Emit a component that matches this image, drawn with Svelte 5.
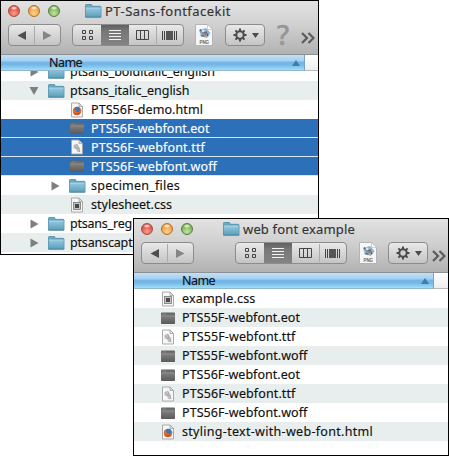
<script>
  const windows = [
    {
      id: 'kit', title: 'PT-Sans-fontfacekit', titleWidth: 126, gap: 11, help: true,
      rows: [
        { icon: 'folder', name: 'ptsans_bolditalic_english', width: 145, depth: 0, arrow: 'right' },
        { icon: 'folder', name: 'ptsans_italic_english', width: 119.5, depth: 0, arrow: 'down' },
        { icon: 'firefox', name: 'PTS56F-demo.html', width: 112, depth: 1 },
        { icon: 'exec', name: 'PTS56F-webfont.eot', width: 118.5, depth: 1, selected: true },
        { icon: 'font', name: 'PTS56F-webfont.ttf', width: 114, depth: 1, selected: true },
        { icon: 'exec', name: 'PTS56F-webfont.woff', width: 126, depth: 1, selected: true },
        { icon: 'folder', name: 'specimen_files', width: 89, depth: 1, arrow: 'right' },
        { icon: 'css', name: 'stylesheet.css', width: 81, depth: 1 },
        { icon: 'folder', name: 'ptsans_reg', width: 62, depth: 0, arrow: 'right' },
        { icon: 'folder', name: 'ptsanscapt', width: 62.5, depth: 0, arrow: 'right' }
      ]
    },
    {
      id: 'example', title: 'web font example', titleWidth: 112, gap: 41, help: false,
      rows: [
        { icon: 'css', name: 'example.css', width: 73.5 },
        { icon: 'exec', name: 'PTS55F-webfont.eot', width: 118 },
        { icon: 'font', name: 'PTS55F-webfont.ttf', width: 113.5 },
        { icon: 'exec', name: 'PTS55F-webfont.woff', width: 125.5 },
        { icon: 'exec', name: 'PTS56F-webfont.eot', width: 118 },
        { icon: 'font', name: 'PTS56F-webfont.ttf', width: 113.5 },
        { icon: 'exec', name: 'PTS56F-webfont.woff', width: 125.5 },
        { icon: 'firefox', name: 'styling-text-with-web-font.html', width: 191 }
      ]
    }
  ];

  // Tracks the letters of a label so that it fills the given width.
  function fit(node, width) {
    const natural = node.getBoundingClientRect().width;
    node.style.letterSpacing = `${(width - natural) / node.textContent.length}px`;
  }
</script>

{#snippet folder()}
  <svg width="17" height="14" viewBox="0 0 17 14">
    <path d="M.5 13V1.200Q.5.500 1.300.500H6q.8 0 .9.800l.2 1H15q1 0 1 1V13z" fill="#67a8c5" stroke="#4c8ba8" stroke-width=".8" />
    <path d="M.900 4h14.700v8.600H.900z" fill="url(#folderFace)" />
    <path d="M.900 4h14.700" stroke="#b5dceb" stroke-width=".8" />
    <path d="M.300 13.200h15.900" stroke="#417d99" stroke-width=".8" />
  </svg>
{/snippet}

{#snippet page(kind)}
  <svg width="17" height="16" viewBox="0 0 17 16">
    <path d="M2.500 1h7.500L13.500 4.500v10.500h-11z" fill="#f7f7f7" stroke="#a2a2a2" stroke-width=".9" />
    <path d="M10 1v3.500h3.500z" fill="#e4e4e4" stroke="#999" stroke-width=".7" />
    {#if kind === 'css'}
      <rect x="4.500" y="5.500" width="7" height="7" fill="#c4c4c4" stroke="#777" stroke-width=".8" />
      <rect x="6" y="7" width="4" height="4" fill="#484848" />
    {:else if kind === 'font'}
      <path d="M4.500 6l3.500-1.500L10 8l1.500 5-3 .3-1.500-3-2.500-.8z" fill="#c2c2c2" />
      <path d="M5 6.500q2 1 2.500 3.500M8 5.500q1.500 3 .5 5M10 8.500q1 2 .5 4.500" fill="none" stroke="#a0a0a0" stroke-width=".8" />
    {:else}
      <circle cx="8" cy="9" r="4.200" fill="#e1692b" />
      <circle cx="8.500" cy="7.600" r="2.800" fill="#3b78b5" />
      <path d="M4 6.500l2 1 1 2 2.500.8 1.500-1.300 1-2.500q1 3-.5 5T7 13 4 10z" fill="#e1692b" />
      <path d="M5.500 11.500q2.500 1.500 5-.5" fill="none" stroke="#b9432a" stroke-width="1" />
    {/if}
  </svg>
{/snippet}

{#snippet exec()}
  <svg width="17" height="14" viewBox="0 0 17 14">
    <rect x="1" y="1.500" width="14" height="11.500" rx=".8" fill="url(#execFace)" />
    <path d="M1.500 5h13" stroke="#959595" stroke-width=".8" />
    <path d="M2.500 3h4" stroke="#8c9691" stroke-width=".7" />
  </svg>
{/snippet}

<svg class="defs" width="0" height="0">
  <defs>
    <linearGradient id="folderFace" x2="0" y2="1"><stop stop-color="#92c9df" /><stop offset="1" stop-color="#609fbc" /></linearGradient>
    <linearGradient id="execFace" x2="0" y2="1"><stop stop-color="#626262" /><stop offset=".35" stop-color="#7c7c7c" /><stop offset="1" stop-color="#5a5a5a" /></linearGradient>
    <linearGradient id="pressed" x2="0" y2="1"><stop stop-color="#606060" /><stop offset=".3" stop-color="#777" /><stop offset="1" stop-color="#848484" /></linearGradient>
  </defs>
</svg>

<main>
  {#each windows as w (w.id)}
    <section class="window {w.id}">
      <header>
        <div class="titlebar">
          <i class="light red"></i><i class="light amber"></i><i class="light green"></i>
          <div class="title" class:second={!w.help}>
            {@render folder()}
            <span use:fit={w.titleWidth}>{w.title}</span>
          </div>
        </div>
        <div class="toolbar">
          <div class="group nav">
            <svg width="51" height="20" viewBox="0 0 51 20">
              <path d="M8.500 10.500 17 6v9z" fill="#4f4f4f" /><path d="M25.500 1v18" stroke="#aaa" /><path d="M42.500 10.500 34 6v9z" fill="#858585" />
            </svg>
          </div>
          <div class="group views" style:margin-left="{w.gap}px">
            <svg width="110" height="20" viewBox="0 0 110 20">
              <rect x="28" width="28" height="20" fill="url(#pressed)" />
              <g fill="none" stroke="#444" stroke-width="1">
                <path d="M9.500 5.500h3v3h-3zM16.500 5.500h3v3h-3zM9.500 11.500h3v3h-3zM16.500 11.500h3v3h-3z" />
                <path d="M63.500 5.500h12v9h-12zM67.500 5.500v9M71.500 5.500v9" />
                <path d="M89.500 6v9M91.500 6v9M101.500 6v9M103.500 6v9" />
              </g>
              <path d="M36 5.500h12M36 8.500h12M36 11.500h12M36 14.500h12" stroke="#f2f2f2" />
              <path d="M83.500 1v18" stroke="#aaa" />
              <rect x="93" y="6" width="7" height="9" fill="#555" />
            </svg>
          </div>
          <svg class="png" width="18" height="22" viewBox="0 0 18 22">
            <path d="M.5.500h12l5 5v16H.500z" fill="#f6f6f6" stroke="#b4b4b4" />
            <path d="M12.500.500v5h5z" fill="#fff" stroke="#bbb" stroke-width=".7" />
            <path d="M4 6l7-2 4.500 5-3.500 5-6-2z" fill="#8cb3ce" />
            <path d="M5 5.500l3 3.500 3-1 2 4" fill="none" stroke="#45637d" stroke-width="1.300" />
            <circle cx="8" cy="7" r="1.500" fill="#d5e4ee" /><circle cx="10.500" cy="10" r="1.500" fill="#b0785a" />
            <path d="M5 12l3-1.500 2 2.500z" fill="#666" />
            <text x="4.500" y="20" textLength="9.500">PNG</text>
          </svg>
          <div class="group action">
            <svg width="38" height="20" viewBox="0 0 38 20">
              <g stroke="#4c4c4c" stroke-width="2"><path d="M14 3.500v13M7.500 10h13M9.400 5.400l9.200 9.200M18.600 5.400l-9.200 9.200" /></g>
              <circle cx="14" cy="10" r="4.800" fill="#4c4c4c" /><circle cx="14" cy="10" r="2.700" fill="#d0d0d0" />
              <path d="M26 8h7l-3.500 5z" fill="#4c4c4c" />
            </svg>
          </div>
          {#if w.help}<span class="help">?</span>{/if}
          <svg class="more" width="14" height="12" viewBox="0 0 14 12">
            <path d="M1 1l5 5-5 5M7.500 1l5 5-5 5" fill="none" stroke="#5c5c5c" stroke-width="2.200" />
          </svg>
        </div>
      </header>
      <div class="columns">
        <div class="name"><span use:fit={33}>Name</span><i></i></div>
        <div class="rest"></div>
      </div>
      <ul>
        {#each w.rows as r}
          <li class:selected={r.selected} class:deep={r.depth === 1}>
            {#if w.help}
              <span class="disclosure">
                {#if r.arrow}
                  <svg width="10" height="10" viewBox="0 0 10 10">
                    <path d={r.arrow === 'down' ? 'M.500 1h9L5 9z' : 'M1.500.500v9L9.500 5z'} fill="#7e7e7e" />
                  </svg>
                {/if}
              </span>
            {/if}
            <span class="icon">
              {#if r.icon === 'folder'}{@render folder()}{:else if r.icon === 'exec'}{@render exec()}{:else}{@render page(r.icon)}{/if}
            </span>
            <span class="label" use:fit={r.width}>{r.name}</span>
          </li>
        {/each}
      </ul>
    </section>
  {/each}
</main>

<style>
  :global(body) { background: #fff; }
  main {
    position: relative;
    width: 449px;
    height: 456px;
    overflow: hidden;
    font: 12.5px/19px "Noto Sans", "Open Sans", sans-serif;
    color: #111;
    -webkit-text-stroke: .15px currentColor;
  }
  .defs { position: absolute; }
  svg { display: block; flex: none; }
  .window {
    position: absolute;
    box-sizing: border-box;
    display: flex;
    flex-direction: column;
    border: 1px solid #000;
    background: #fff;
    overflow: hidden;
  }
  .kit { left: 0; top: 0; width: 319px; height: 255px; }
  .example { left: 133px; top: 218px; width: 316px; height: 238px; }
  header {
    flex: none;
    box-sizing: border-box;
    height: 54px;
    background: linear-gradient(#e2e2e2, #d0d0d0 45%, #b2b2b2);
    border-bottom: 1px solid #8b9297;
  }
  .titlebar { display: flex; align-items: center; height: 20px; padding-left: 7px; }
  .light {
    box-sizing: border-box;
    width: 12px;
    height: 12px;
    margin-right: 8px;
    border-radius: 50%;
    border: 1px solid #a54c42;
    background: radial-gradient(ellipse 4px 2px at 50% 20%, #fff, transparent), radial-gradient(circle at 50% 75%, #ff9d88, #db4c44 70%);
  }
  .amber { border-color: #ab7132; background: radial-gradient(ellipse 4px 2px at 50% 20%, #fff, transparent), radial-gradient(circle at 50% 75%, #ffd487, #ed9b3e 70%); }
  .green { border-color: #597d40; background: radial-gradient(ellipse 4px 2px at 50% 20%, #fff, transparent), radial-gradient(circle at 50% 75%, #c2e5a2, #77ae55 70%); }
  .title { display: flex; align-items: center; gap: 3px; margin-left: 17px; font-size: 13px; color: #333; white-space: nowrap; }
  .title.second { margin-left: 22px; }
  .toolbar { display: flex; align-items: center; height: 22px; padding: 3px 3px 0 7px; }
  .example .toolbar { padding-right: 2px; }
  .group {
    box-sizing: border-box;
    flex: none;
    height: 22px;
    border: 1px solid #8c8c8c;
    border-radius: 4px;
    background: linear-gradient(#e9e9e9, #c4c4c4);
    overflow: hidden;
  }
  .nav { width: 53px; }
  .views { width: 112px; }
  .action { width: 40px; margin-left: 12px; }
  .png { margin-left: 11px; }
  .example .png { margin-left: 12px; }
  .example .action { margin-left: 11px; }
  .png text { font: bold 4.500px "Liberation Sans", sans-serif; fill: #666; }
  .help { width: 14px; margin-left: 12px; font: 500 27px/22px "Noto Sans", sans-serif; color: #979797; -webkit-text-stroke: .6px #979797; }
  .more { margin: 5px 0 0 auto; }
  .columns {
    flex: none;
    display: flex;
    height: 16px;
    line-height: 15px;
  }
  .columns .name {
    flex: 1;
    box-sizing: border-box;
    display: flex;
    align-items: center;
    justify-content: space-between;
    padding: 0 4px 0 48px;
    background: linear-gradient(#c5e0f5 0, #a2cff1 40%, #75b5e5 48%, #72b8e8 65%, #a4ddf5);
    border-right: 1px solid #77a4c3;
    border-bottom: 1px solid #8fb9cb;
  }
  .columns i { border: 4px solid transparent; border-top: 0; border-bottom: 6px solid #427da9; }
  .rest { width: 13px; box-sizing: border-box; background: linear-gradient(#fff, #eee); border-bottom: 1px solid #bbb; }
  .example .rest { width: 14px; }
  ul { list-style: none; margin: 0; padding: 0; flex: 1; min-height: 0; overflow: hidden; }
  .kit ul { display: flex; flex-direction: column; }
  .kit li:first-child { margin-top: -9px; }
  li {
    box-sizing: border-box;
    flex: none;
    display: flex;
    align-items: center;
    height: 19px;
    padding-left: 26px;
    white-space: nowrap;
  }
  .kit li { padding-left: 28px; }
  .kit li.deep { padding-left: 49px; }
  li:nth-child(even) { background: #e8eeee; }
  li.selected { background: #2b70b8; color: #fff; border-bottom: 1px solid #d5e6f5; }
  .disclosure { width: 19px; }
  .icon { width: 17px; margin-right: 5px; }
</style>
